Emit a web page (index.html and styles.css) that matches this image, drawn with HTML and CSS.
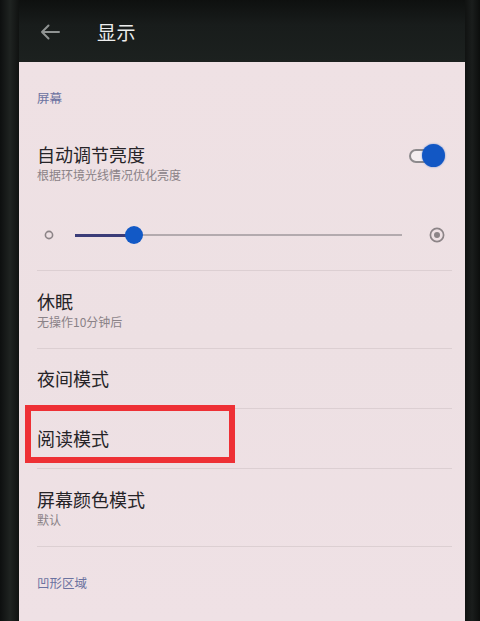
FILE: index.html
```
<!DOCTYPE html>
<html lang="zh">
<head>
<meta charset="utf-8">
<link rel="stylesheet" href="styles.css">
</head>
<body>
<div class="phone">
  <header class="topbar">
    <svg class="back" width="20" height="16" viewBox="0 0 20 16"><path d="M19 8H2M8.5 1.5L2 8l6.5 6.5" fill="none" stroke="#8f9392" stroke-width="2" stroke-linecap="round" stroke-linejoin="round"/></svg>
    <span class="title">显示</span>
  </header>
  <main class="screen">
    <div class="section-label first">屏幕</div>
    <div class="auto-row">
      <div class="texts">
        <div class="item-title">自动调节亮度</div>
        <div class="item-sub">根据环境光线情况优化亮度</div>
      </div>
      <div class="toggle"><span class="track"></span><span class="knob"></span></div>
    </div>
    <div class="slider-row">
      <svg class="sun-small" width="12" height="12" viewBox="0 0 12 12"><circle cx="6" cy="6" r="3.6" fill="none" stroke="#8c8487" stroke-width="1.6"/></svg>
      <div class="slider">
        <span class="fill" style="width:18%"></span>
        <span class="thumb" style="left:18%"></span>
      </div>
      <svg class="sun-big" width="18" height="18" viewBox="0 0 18 18"><circle cx="9" cy="9" r="6.6" fill="none" stroke="#8c8487" stroke-width="1.7"/><circle cx="9" cy="9" r="3" fill="#8c8487"/></svg>
    </div>
    <div class="divider"></div>
    <div class="item two">
      <div class="item-title">休眠</div>
      <div class="item-sub">无操作10分钟后</div>
    </div>
    <div class="divider"></div>
    <div class="item one"><div class="item-title">夜间模式</div></div>
    <div class="divider"></div>
    <div class="item one"><div class="item-title">阅读模式</div></div>
    <div class="divider"></div>
    <div class="item two">
      <div class="item-title">屏幕颜色模式</div>
      <div class="item-sub">默认</div>
    </div>
    <div class="divider"></div>
    <div class="section-label second">凹形区域</div>
  </main>
  <div class="highlight"></div>
</div>
</body>
</html>
```
FILE: styles.css
```
html, body {
  margin: 0;
  padding: 0;
  background: #141716;
  font-family: "Noto Sans CJK SC", "Noto Sans", sans-serif;
}
.phone {
  position: relative;
  width: 480px;
  height: 621px;
  overflow: hidden;
  background: linear-gradient(90deg, #0d0f0f 0, #1f2321 10px, #101211 19px, #101211 465px, #1a1d1c 472px, #0c0e0d 480px);
}
.topbar {
  height: 62px;
  display: flex;
  align-items: center;
  box-sizing: border-box;
  background: linear-gradient(180deg, #0e100f 0, #181c1b 40%, #1c211f 100%);
  margin: 0 15px 0 19px;
  padding-left: 21px;
}
.back { flex: none; margin-top: 1px; }
.title {
  color: #eceded;
  font-size: 19px;
  margin-left: 37px;
  margin-top: 1px;
  letter-spacing: 0.5px;
}
.screen {
  margin-left: 19px;
  width: 446px;
  height: 559px;
  background: linear-gradient(180deg, #efe1e4 0, #ede0e3 50%, #efe1e5 100%);
  padding: 0 13px 0 18px;
  box-sizing: border-box;
}
.section-label {
  color: #6b72a0;
  font-size: 12.5px;
  line-height: 16px;
}
.section-label.first { padding-top: 28px; }
.section-label.second { padding-top: 28px; }
.auto-row {
  display: flex;
  align-items: center;
  justify-content: space-between;
  padding-top: 37px;
}
.item-title {
  color: #262428;
  font-size: 18px;
  line-height: 22px;
}
.item-sub {
  color: #8a8287;
  font-size: 12px;
  line-height: 16px;
  margin-top: 2px;
}
.toggle {
  position: relative;
  width: 36px;
  height: 24px;
  margin-right: 7px;
  margin-top: -14px;
}
.toggle .track {
  position: absolute;
  left: 0;
  top: 5px;
  width: 30px;
  height: 14px;
  box-sizing: border-box;
  border: 2px solid #8d8a8d;
  border-radius: 8px;
  background: #f4eef0;
}
.toggle .knob {
  position: absolute;
  right: 0;
  top: 0;
  width: 23px;
  height: 23px;
  border-radius: 50%;
  background: #1257c4;
  box-shadow: 0 0 2px rgba(18,87,196,0.6);
}
.slider-row {
  display: flex;
  align-items: center;
  height: 20px;
  margin-top: 42px;
  padding-left: 6px;
}
.sun-small { flex: none; }
.slider {
  position: relative;
  flex: 1;
  height: 2px;
  margin: 0 26px 0 20px;
  background: #b3aaae;
}
.slider .fill {
  position: absolute;
  left: 0;
  top: -0.5px;
  height: 3px;
  background: #3b3c78;
}
.slider .thumb {
  position: absolute;
  top: -8px;
  width: 18px;
  height: 18px;
  margin-left: -9px;
  border-radius: 50%;
  background: #1259c6;
}
.sun-big { flex: none; margin-right: 6px; }
.divider {
  height: 1px;
  background: #dccfd2;
  margin-top: 25px;
}
.item + .divider { margin-top: 0; }
.item.two { padding: 19px 0 18px; }
.item.one { padding: 18px 0 19px; }
.highlight {
  position: absolute;
  left: 25px;
  top: 405px;
  width: 210px;
  height: 58px;
  box-sizing: border-box;
  border: 6px solid #ee3035;
}
```
